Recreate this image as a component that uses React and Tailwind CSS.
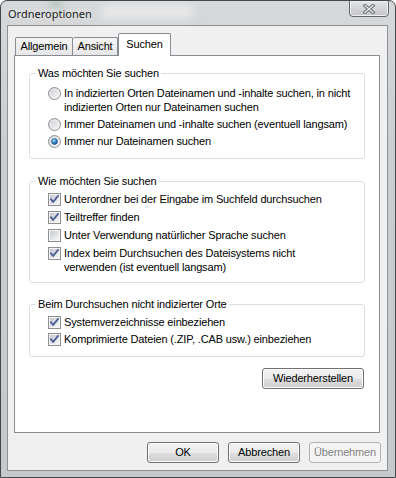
import React from 'react';

function Radio({ checked }) {
  return (
    <svg width="13" height="13" viewBox="0 0 13 13" className="shrink-0 mt-[1px]">
      <defs>
        <linearGradient id="radioFill" x1="0" y1="0" x2="1" y2="1">
          <stop offset="0" stopColor="#c9cbce" />
          <stop offset="1" stopColor="#fbfbfb" />
        </linearGradient>
        <radialGradient id="radioDot" cx="0.4" cy="0.35" r="0.75">
          <stop offset="0" stopColor="#a6dcfb" />
          <stop offset="0.55" stopColor="#2f7cc0" />
          <stop offset="1" stopColor="#173f78" />
        </radialGradient>
      </defs>
      <circle cx="6.5" cy="6.5" r="6" fill="url(#radioFill)" stroke="#8e9194" />
      <circle cx="6.5" cy="6.5" r="4.4" fill="none" stroke="#f3f3f3" strokeWidth="0.8" />
      {checked && <circle cx="6.5" cy="6.5" r="3" fill="url(#radioDot)" stroke="#1d4d86" strokeWidth="0.5" />}
    </svg>
  );
}

function Check({ checked }) {
  return (
    <svg width="13" height="13" viewBox="0 0 13 13" className="shrink-0 mt-[1px]">
      <defs>
        <linearGradient id="checkFill" x1="0" y1="0" x2="1" y2="1">
          <stop offset="0" stopColor="#c4c8cf" />
          <stop offset="1" stopColor="#f8f8f8" />
        </linearGradient>
      </defs>
      <rect x="0.5" y="0.5" width="12" height="12" fill="#f6f6f6" stroke="#8e8f8f" />
      <rect x="2" y="2" width="9" height="9" fill="url(#checkFill)" />
      {checked && (
        <path d="M3 6.3 L5.2 8.8 L10 3" fill="none" stroke="#4a5f97" strokeWidth="1.9" strokeLinecap="square" />
      )}
    </svg>
  );
}

function Option({ control, children }) {
  return (
    <div className="flex items-start gap-[3px] leading-[14px] whitespace-nowrap">
      {control}
      <span>{children}</span>
    </div>
  );
}

// legend sits inside the fieldset padding, so the 18px indent goes on the inner list
function Group({ title, className, gap, children }) {
  return (
    <fieldset className={`ml-[14px] w-[336px] border border-[#d5dfe5] rounded-[3px] ${className}`}>
      <legend className="ml-[6px] px-[2px] leading-[13px]">{title}</legend>
      <div className={`pl-[18px] flex flex-col ${gap}`}>{children}</div>
    </fieldset>
  );
}

const btn =
  'h-[21px] rounded-[3px] border border-[#707070] bg-[linear-gradient(to_bottom,#f2f2f2_0%,#ebebeb_50%,#dddddd_51%,#cfcfcf_100%)] shadow-[inset_0_0_0_1px_#fcfcfc] flex items-center justify-center';

export default function App() {
  return (
    <div className="w-[396px] h-[478px] relative overflow-hidden rounded-t-[7px] border border-[#44474a] bg-[linear-gradient(to_bottom,#d6d8da,#cbced1_30%,#c6c9cc)] flex flex-col font-['Liberation_Sans',Arial,sans-serif] text-[11px] text-black">
      <div className="h-[24px] flex items-start justify-between pl-[7px] pr-[6px] relative">
        <div className="absolute left-[100px] top-[4px] w-[92px] h-[13px] bg-[#ededed] blur-[4px] opacity-80" />
        <div className="absolute left-[48px] top-[0px] w-[14px] h-[6px] bg-[#9fb7a6] blur-[3px] opacity-60" />
        <span className="relative mt-[5px] font-['Noto_Sans',sans-serif] text-[11px] leading-[15px] text-[#1b1b1b] [text-shadow:0_0_6px_#ffffff]">
          Ordneroptionen
        </span>
        <div className="relative -mt-px w-[40px] h-[17px] rounded-b-[4px] border border-[#62666a] bg-[linear-gradient(to_bottom,#e4e5e6,#cfd1d3_60%,#c3c5c8)] shadow-[inset_0_0_0_1px_#f0f0f0] flex items-center justify-center">
          <svg width="14" height="10" viewBox="0 0 14 10">
            <path d="M3 1.5 L11 8.5 M11 1.5 L3 8.5" stroke="#6f7275" strokeWidth="3.4" strokeLinecap="square" />
            <path d="M3 1.5 L11 8.5 M11 1.5 L3 8.5" stroke="#e2e3e4" strokeWidth="1.4" strokeLinecap="square" />
          </svg>
        </div>
      </div>

      <div className="ml-[6px] w-[381px] h-[446px] border border-[#8e9297] bg-[#f0f0f0] flex flex-col tracking-[-0.15px]">
        <div className="pl-[7px] pt-[7px] flex items-end">
          <div className="w-[58px] h-[18px] border border-b-0 border-[#898c95] rounded-t-[2px] bg-[linear-gradient(to_bottom,#f4f4f4,#e6e6e6)] flex items-center justify-center">
            Allgemein
          </div>
          <div className="w-[45px] h-[18px] border border-b-0 border-l-0 border-[#898c95] rounded-t-[2px] bg-[linear-gradient(to_bottom,#f4f4f4,#e6e6e6)] flex items-center justify-center">
            Ansicht
          </div>
          <div className="relative z-10 w-[53px] h-[23px] mb-[-1px] border border-b-0 border-[#898c95] rounded-t-[2px] bg-white flex items-center justify-center pb-[2px]">
            Suchen
          </div>
        </div>

        <div className="ml-[6px] w-[366px] h-[378px] border border-[#898c95] bg-white flex flex-col">
          <Group title="Was möchten Sie suchen" className="mt-[11px] pt-[6px] pb-[10px]" gap="gap-[3px]">
            <Option control={<Radio />}>
              In indizierten Orten Dateinamen und -inhalte suchen, in nicht
              <br />
              indizierten Orten nur Dateinamen suchen
            </Option>
            <Option control={<Radio />}>Immer Dateinamen und -inhalte suchen (eventuell langsam)</Option>
            <Option control={<Radio checked />}>Immer nur Dateinamen suchen</Option>
          </Group>

          <Group title="Wie möchten Sie suchen" className="mt-[16px] pt-[4px] pb-[8px]" gap="gap-[4px]">
            <Option control={<Check checked />}>Unterordner bei der Eingabe im Suchfeld durchsuchen</Option>
            <Option control={<Check checked />}>Teiltreffer finden</Option>
            <Option control={<Check />}>Unter Verwendung natürlicher Sprache suchen</Option>
            <Option control={<Check checked />}>
              Index beim Durchsuchen des Dateisystems nicht
              <br />
              verwenden (ist eventuell langsam)
            </Option>
          </Group>

          <Group title="Beim Durchsuchen nicht indizierter Orte" className="mt-[15px] pt-[4px] pb-[10px]" gap="gap-[3px]">
            <Option control={<Check checked />}>Systemverzeichnisse einbeziehen</Option>
            <Option control={<Check checked />}>Komprimierte Dateien (.ZIP, .CAB usw.) einbeziehen</Option>
          </Group>

          <div className="mt-[11px] self-end mr-[15px]">
            <div className={`${btn} w-[102px]`}>Wiederherstellen</div>
          </div>
        </div>

        <div className="mt-[9px] pr-[6px] flex justify-end gap-[9px]">
          <div className={`${btn} w-[72px]`}>OK</div>
          <div className={`${btn} w-[72px]`}>Abbrechen</div>
          <div className="w-[72px] h-[21px] rounded-[3px] border border-[#adb2b5] bg-[#f4f4f4] text-[#838383] flex items-center justify-center">
            Übernehmen
          </div>
        </div>
      </div>
    </div>
  );
}
